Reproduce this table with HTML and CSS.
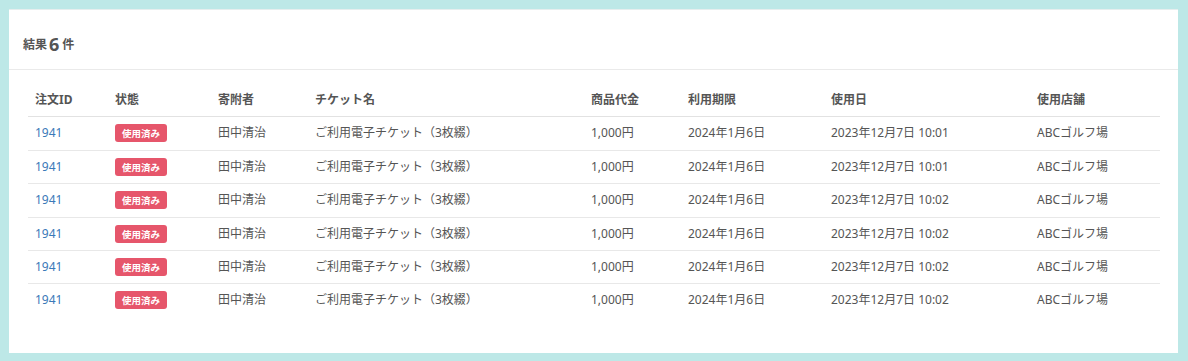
FILE: index.html
```html
<!DOCTYPE html>
<html lang="ja">
<head>
<meta charset="utf-8">
<link rel="stylesheet" href="styles.css">
</head>
<body>
<div class="card">
  <div class="card-header">
    <span class="lbl">結果</span><span class="count">6</span><span class="lbl">件</span>
  </div>
  <div class="card-body">
    <table class="tbl">
      <colgroup>
        <col class="c1"><col class="c2"><col class="c3"><col class="c4"><col class="c5"><col class="c6"><col class="c7"><col class="c8">
      </colgroup>
      <thead>
        <tr><th>注文ID</th><th>状態</th><th>寄附者</th><th>チケット名</th><th>商品代金</th><th>利用期限</th><th>使用日</th><th>使用店舗</th></tr>
      </thead>
      <tbody>
        <tr><td><a class="id">1941</a></td><td><span class="badge">使用済み</span></td><td>田中清治</td><td>ご利用電子チケット（3枚綴）</td><td>1,000円</td><td>2024年1月6日</td><td>2023年12月7日 10:01</td><td>ABCゴルフ場</td></tr>
        <tr><td><a class="id">1941</a></td><td><span class="badge">使用済み</span></td><td>田中清治</td><td>ご利用電子チケット（3枚綴）</td><td>1,000円</td><td>2024年1月6日</td><td>2023年12月7日 10:01</td><td>ABCゴルフ場</td></tr>
        <tr><td><a class="id">1941</a></td><td><span class="badge">使用済み</span></td><td>田中清治</td><td>ご利用電子チケット（3枚綴）</td><td>1,000円</td><td>2024年1月6日</td><td>2023年12月7日 10:02</td><td>ABCゴルフ場</td></tr>
        <tr><td><a class="id">1941</a></td><td><span class="badge">使用済み</span></td><td>田中清治</td><td>ご利用電子チケット（3枚綴）</td><td>1,000円</td><td>2024年1月6日</td><td>2023年12月7日 10:02</td><td>ABCゴルフ場</td></tr>
        <tr><td><a class="id">1941</a></td><td><span class="badge">使用済み</span></td><td>田中清治</td><td>ご利用電子チケット（3枚綴）</td><td>1,000円</td><td>2024年1月6日</td><td>2023年12月7日 10:02</td><td>ABCゴルフ場</td></tr>
        <tr><td><a class="id">1941</a></td><td><span class="badge">使用済み</span></td><td>田中清治</td><td>ご利用電子チケット（3枚綴）</td><td>1,000円</td><td>2024年1月6日</td><td>2023年12月7日 10:02</td><td>ABCゴルフ場</td></tr>
      </tbody>
    </table>
  </div>
</div>
</body>
</html>
```

FILE: styles.css
```css
html, body {
  margin: 0;
  padding: 0;
}
body {
  background: #bde8e7;
  padding: 9px 10px 8px 9px;
  font-family: "Noto Sans", "Noto Sans CJK JP", sans-serif;
  color: #555;
  font-size: 12px;
}
.card {
  background: #fff;
  height: 344px;
  box-sizing: border-box;
  border-top: 1px solid #e6eeee;
}
.card-header {
  height: 60px;
  box-sizing: border-box;
  border-bottom: 1px solid #eaeaea;
  padding: 8px 14px 0 14px;
  display: flex;
  align-items: center;
  font-weight: bold;
  color: #555;
}
.card-header .lbl {
  font-size: 12px;
}
.card-header .count {
  font-size: 18px;
  margin: 0 3px 0 2px;
  line-height: 1;
}
.card-body {
  padding: 14px 18px 0 19px;
}
.tbl {
  width: 100%;
  border-collapse: collapse;
  table-layout: fixed;
}
.c1 { width: 80px; }
.c2 { width: 103px; }
.c3 { width: 97px; }
.c4 { width: 276px; }
.c5 { width: 97px; }
.c6 { width: 143px; }
.c7 { width: 206px; }
.c8 { width: auto; }
.tbl th, .tbl td {
  text-align: left;
  padding: 7px 7px;
  height: 18.4px;
  line-height: 18.4px;
  vertical-align: middle;
  white-space: nowrap;
}
.tbl th {
  font-weight: bold;
  color: #555;
  border-bottom: 1px solid #e2e2e2;
}
.tbl tbody tr + tr td {
  border-top: 1px solid #e8e8e8;
}
.tbl td {
  color: #555;
}
.id {
  color: #3a79b8;
  text-decoration: none;
}
.badge {
  display: inline-block;
  vertical-align: top;
  background: #e6566b;
  color: #fff;
  font-family: "Noto Sans CJK JP", sans-serif;
  font-size: 9.5px;
  font-weight: bold;
  line-height: 18px;
  height: 18px;
  padding: 0 7px;
  border-radius: 3px;
}
```
